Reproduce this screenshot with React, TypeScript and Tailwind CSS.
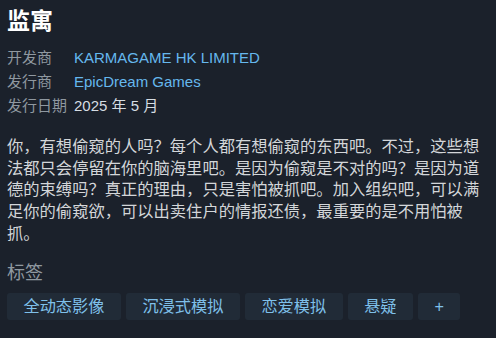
const font = {
  fontFamily: '"Liberation Sans", "Noto Sans CJK SC", sans-serif',
};

const details = [
  { label: "开发商", value: "KARMAGAME HK LIMITED", link: true },
  { label: "发行商", value: "EpicDream Games", link: true },
  { label: "发行日期", value: "2025 年 5 月", link: false },
];

const tags = ["全动态影像", "沉浸式模拟", "恋爱模拟", "悬疑", "+"];

export default function App() {
  return (
    <div
      style={font}
      className="w-[496px] h-[338px] overflow-hidden bg-[#1b212b] pl-[7px] pt-[6px]"
    >
      <h1 className="text-[23px] leading-[30px] font-bold text-white">监寓</h1>

      {/* ===== info rows ===== */}
      <div className="mt-[10px] flex flex-col">
        {details.map((d) => (
          <div key={d.label} className="flex h-[24px] items-center text-[15px] leading-[24px]">
            <span className="w-[67px] text-[#8f98a0]">{d.label}</span>
            <span className={d.link ? "text-[#66b8ee]" : "text-[#d6dde3]"}>{d.value}</span>
          </div>
        ))}
      </div>

      {/* ===== description ===== */}
      <p className="mt-[18px] w-[478px] text-[16.3px] leading-[21.7px] text-[#d3d6d9]">
        你，有想偷窥的人吗？每个人都有想偷窥的东西吧。不过，这些想法都只会停留在你的脑海里吧。是因为偷窥是不对的吗？是因为道德的束缚吗？真正的理由，只是害怕被抓吧。加入组织吧，可以满足你的偷窥欲，可以出卖住户的情报还债，最重要的是不用怕被抓。
      </p>

      {/* ===== tags ===== */}
      <div className="mt-[16px] text-[18px] leading-[24px] text-[#8f98a0]">标签</div>
      <div className="mt-[8px] flex gap-[5px]">
        {tags.map((t) => (
          <span
            key={t}
            className="flex h-[27px] items-center rounded-[3px] bg-[#212b37] px-[16.5px] text-[16.2px] text-[#7fc0ea]"
          >
            {t}
          </span>
        ))}
      </div>
    </div>
  );
}
